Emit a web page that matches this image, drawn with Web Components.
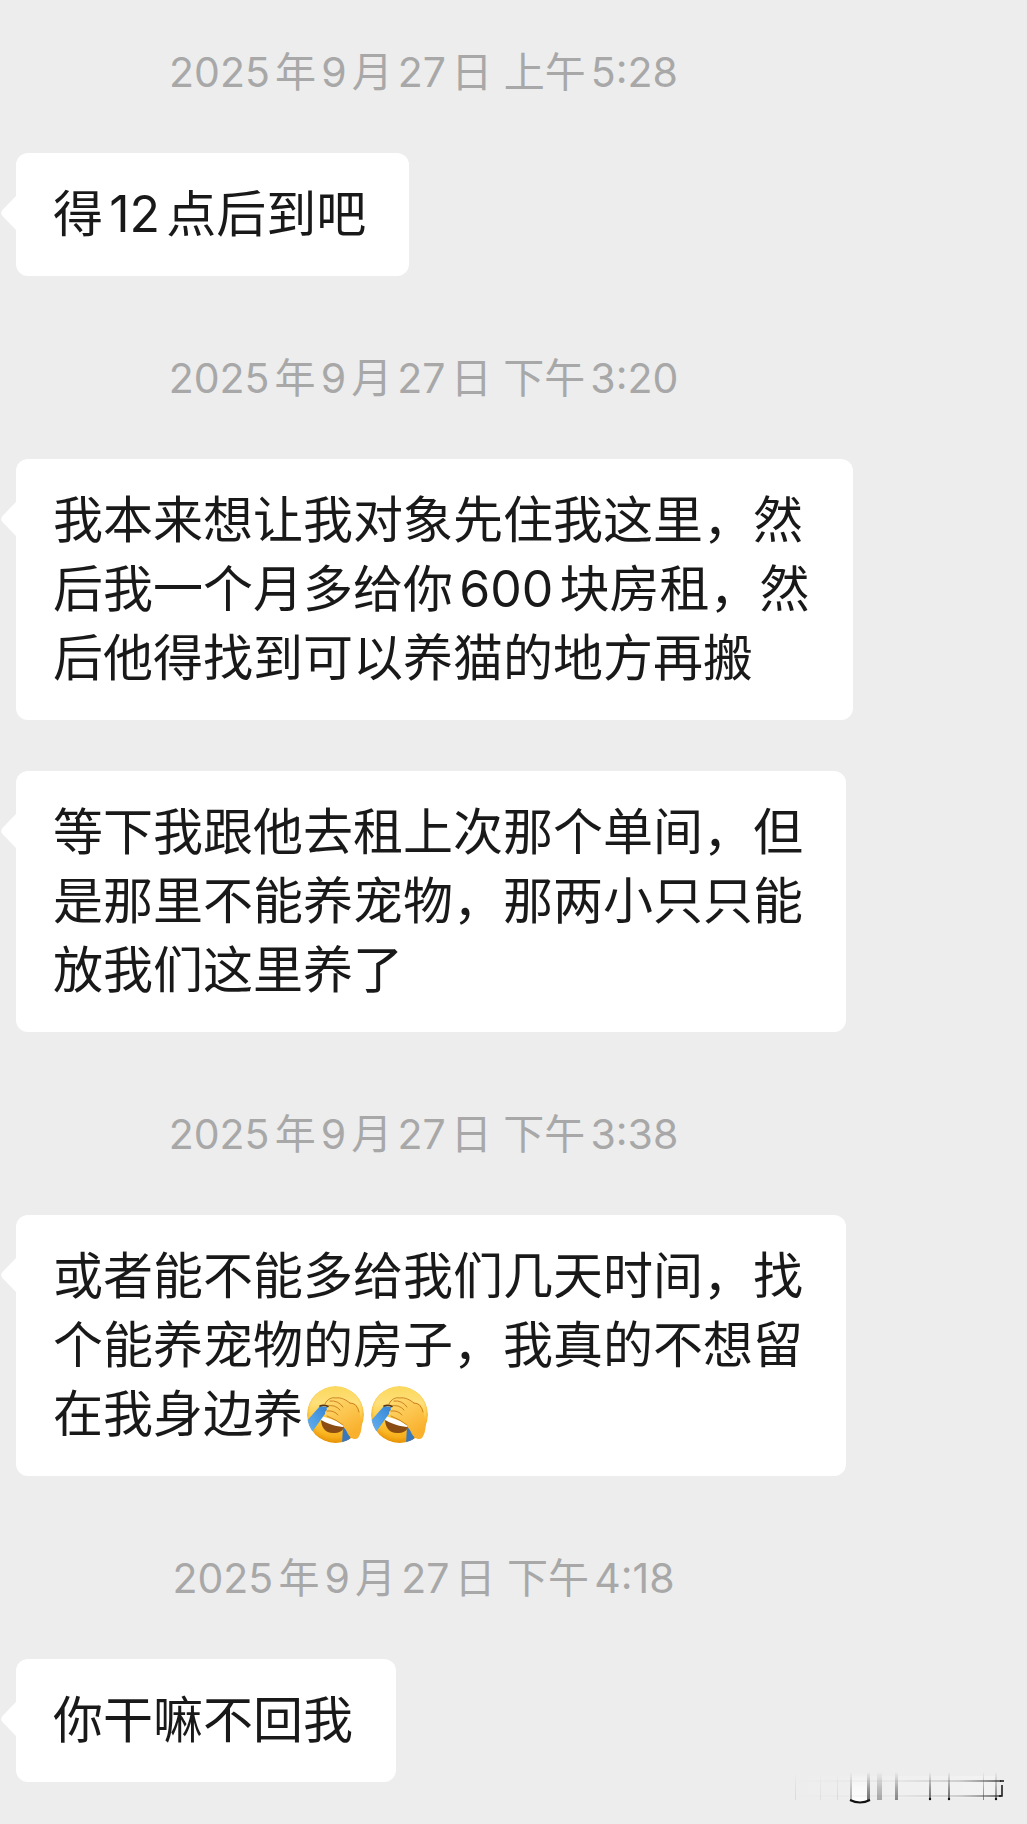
<!DOCTYPE html>
<html lang="zh-CN">
<head>
<meta charset="utf-8">
<meta name="viewport" content="width=device-width, initial-scale=1">
<title>聊天记录</title>
<style>
  body {
    margin: 0;
    background: #ededed;
    color: #191919;
    font-family: Inter, "Noto Sans CJK SC", sans-serif;
    text-autospace: normal;
  }
  chat-bubble + chat-bubble { margin-top: 51px; }
</style>
</head>
<body>
<chat-log>
  <chat-time datetime="2025-09-27T05:28">2025年9月27日 上午5:28</chat-time>
  <chat-bubble>得12点后到吧</chat-bubble>
  <chat-time datetime="2025-09-27T15:20">2025年9月27日 下午3:20</chat-time>
  <chat-bubble>我本来想让我对象先住我这里，然<br>后我一个月多给你600块房租，然<br>后他得找到可以养猫的地方再搬</chat-bubble>
  <chat-bubble>等下我跟他去租上次那个单间，但<br>是那里不能养宠物，那两小只只能<br>放我们这里养了</chat-bubble>
  <chat-time datetime="2025-09-27T15:38">2025年9月27日 下午3:38</chat-time>
  <chat-bubble>或者能不能多给我们几天时间，找<br>个能养宠物的房子，我真的不想留<br>在我身边养<facepalm-emoji></facepalm-emoji><facepalm-emoji></facepalm-emoji></chat-bubble>
  <chat-time datetime="2025-09-27T16:18">2025年9月27日 下午4:18</chat-time>
  <chat-bubble>你干嘛不回我</chat-bubble>
  <faded-mark slot="mark"></faded-mark>
</chat-log>

<template id="log-tpl">
  <style>
    :host { display: block; position: relative; min-height: 100vh; box-sizing: border-box; padding: 0 16px 42px; }
    main { display: flex; flex-direction: column; align-items: flex-start; }
    ::slotted(chat-time:first-child) { padding-top: 42px; }
    ::slotted(faded-mark) { position: absolute; right: 20px; bottom: 16px; }
  </style>
  <main><slot></slot></main>
  <slot name="mark"></slot>
</template>

<template id="time-tpl">
  <style>
    :host { display: block; align-self: stretch; padding: 72px 180px 51px 0; text-align: center; color: #a8a8a8; font-size: 41px; line-height: 60px; }
  </style>
  <time><slot></slot></time>
</template>

<template id="bubble-tpl">
  <style>
    :host { display: block; position: relative; width: fit-content; padding: 27px 43px 27px 37px; border-radius: 12px; background: #fff; font-size: 50px; line-height: 69px; }
    svg { position: absolute; right: 100%; top: 43px; width: 15px; height: 34px; fill: #fff; }
  </style>
  <svg viewBox="0 0 15 34" aria-hidden="true"><path d="M15 0V34L1.500 20Q-1 17 1.500 14Z"/></svg>
  <slot></slot>
</template>

<template id="emoji-tpl">
  <style>
    :host { display: inline-block; width: 64px; height: 57px; line-height: 0; vertical-align: -11px; }
    svg { display: block; margin: 0 auto; width: 57px; height: 57px; }
  </style>
  <svg viewBox="0 0 57 57" role="img" aria-label="捂脸">
    <defs>
      <linearGradient id="f" x1="0" y1="0" x2="0" y2="1"><stop offset="0" stop-color="#fbd75c"/><stop offset=".3" stop-color="#ffe07a"/><stop offset=".6" stop-color="#ffc93c"/><stop offset="1" stop-color="#f5a50f"/></linearGradient>
      <radialGradient id="r" cx=".5" cy=".45" r=".55"><stop offset=".8" stop-color="#e08a00" stop-opacity="0"/><stop offset="1" stop-color="#d98200" stop-opacity=".55"/></radialGradient>
      <linearGradient id="h" x1="0" y1="0" x2=".5" y2="1"><stop offset="0" stop-color="#ffdc74"/><stop offset="1" stop-color="#f9b02c"/></linearGradient>
      <linearGradient id="t" x1="1" y1="0" x2="0" y2="1"><stop offset="0" stop-color="#3583d3"/><stop offset="1" stop-color="#67b5f2"/></linearGradient>
      <clipPath id="c"><circle cx="28.500" cy="28.500" r="28.500"/></clipPath>
    </defs>
    <g clip-path="url(#c)">
      <circle cx="28.500" cy="28.500" r="28.500" fill="url(#f)"/>
      <circle cx="28.500" cy="28.500" r="28.500" fill="url(#r)"/>
      <path d="M14 33C14 41 18 47 26 47C32 47 36 45 37 41Z" fill="#8b4c14"/>
      <path d="M14 30L37 37L36 41C27 40 19 37 14 34Z" fill="#fff"/>
      <path d="M13 20L21 21L18 28L5 46L-2 37Z" fill="url(#t)"/>
      <path d="M36 41L44 47L42 58L35 58Z" fill="#3a78bd"/>
    </g>
    <path d="M21 21L18 18C19 13 25 11 29 12C34 11 39 14 43 17C49 16 52 21 53 28C55 36 56 45 51 52C47 55 42 51 40 46L36 39C30 35 24 33 20 30C17 28 18 24 21 24C19 23 19 22 21 21Z" fill="url(#h)"/>
    <path d="M18 18C20 13 25 11 29 12C34 11 39 14 43 17M23 15Q31 14 36 21M20 20Q28 18 33 24M20 25Q27 24 31 29M43 17Q50 17 52 26M20 30Q30 34 36 39" fill="none" stroke="#cc8420" stroke-width="1" stroke-linecap="round"/>
    <path d="M13 20Q17 18.500 21 20.500" fill="none" stroke="#5a3410" stroke-width="1.500" stroke-linecap="round"/>
  </svg>
</template>

<template id="mark-tpl">
  <style>
    :host { display: block; width: 222px; height: 40px; }
    svg { display: block; width: 100%; height: 100%; }
  </style>
  <svg viewBox="0 0 222 40" aria-hidden="true">
    <defs>
      <linearGradient id="v" x1="0" y1="0" x2="0" y2="1"><stop offset="0" stop-color="#333" stop-opacity="0"/><stop offset=".6" stop-color="#333" stop-opacity=".5"/><stop offset="1" stop-color="#333" stop-opacity=".7"/></linearGradient>
      <linearGradient id="w" x1="0" y1="0" x2="0" y2="1"><stop offset="0" stop-color="#fff" stop-opacity="0"/><stop offset=".6" stop-color="#fff" stop-opacity=".7"/><stop offset="1" stop-color="#fff"/></linearGradient>
      <linearGradient id="l" x1="0" y1="0" x2="1" y2="0"><stop offset="0" stop-color="#fff" stop-opacity="0"/><stop offset="1" stop-color="#fff" stop-opacity=".3"/></linearGradient>
      <linearGradient id="x" x1="0" y1="0" x2="1" y2="0"><stop offset="0" stop-color="#666" stop-opacity="0"/><stop offset=".5" stop-color="#666" stop-opacity=".06"/><stop offset=".8" stop-color="#666" stop-opacity=".25"/><stop offset="1" stop-color="#333" stop-opacity=".7"/></linearGradient>
    </defs>
    <rect x="4" y="8" width="208" height="22" fill="url(#l)"/>
    <rect x="67" y="4" width="18" height="30" fill="url(#w)"/>
    <g fill="url(#v)">
      <rect x="10" y="4" width="1" height="28" opacity=".15"/><rect x="35" y="4" width="1" height="28" opacity=".1"/><rect x="52" y="4" width="1" height="28" opacity=".15"/>
      <rect x="65" y="4" width="2" height="28" opacity=".5"/><rect x="82" y="4" width="3" height="28"/>
      <rect x="92" y="4" width="5" height="28" opacity=".55"/><rect x="110" y="4" width="3" height="28" opacity=".8"/>
      <rect x="144" y="4" width="2" height="28"/><rect x="163" y="4" width="2" height="28"/>
      <rect x="198" y="4" width="1" height="28" opacity=".8"/><rect x="210" y="4" width="2" height="28" opacity=".8"/>
    </g>
    <path d="M65 32Q75 37 85 32" fill="none" stroke="#111" stroke-width="2"/>
    <rect x="4" y="12" width="212" height="2" fill="url(#x)"/><rect x="4" y="27" width="212" height="2" fill="url(#x)"/>
    <g fill="#111"><circle cx="145" cy="31" r="1.200"/><circle cx="164" cy="31" r="1.200"/><circle cx="211" cy="31" r="1.200"/></g>
    <path d="M215 13H219M217 17V28H214" fill="none" stroke="#111" stroke-width="1.500"/>
  </svg>
</template>

<script>
  const define = (name, templateId) => customElements.define(name, class extends HTMLElement {
    constructor() {
      super();
      this.attachShadow({ mode: 'open' }).append(document.getElementById(templateId).content.cloneNode(true));
    }
    connectedCallback() {
      const time = this.shadowRoot.querySelector('time');
      if (time) time.dateTime = this.getAttribute('datetime');
    }
  });
  define('chat-log', 'log-tpl');
  define('chat-time', 'time-tpl');
  define('chat-bubble', 'bubble-tpl');
  define('facepalm-emoji', 'emoji-tpl');
  define('faded-mark', 'mark-tpl');
</script>
</body>
</html>
